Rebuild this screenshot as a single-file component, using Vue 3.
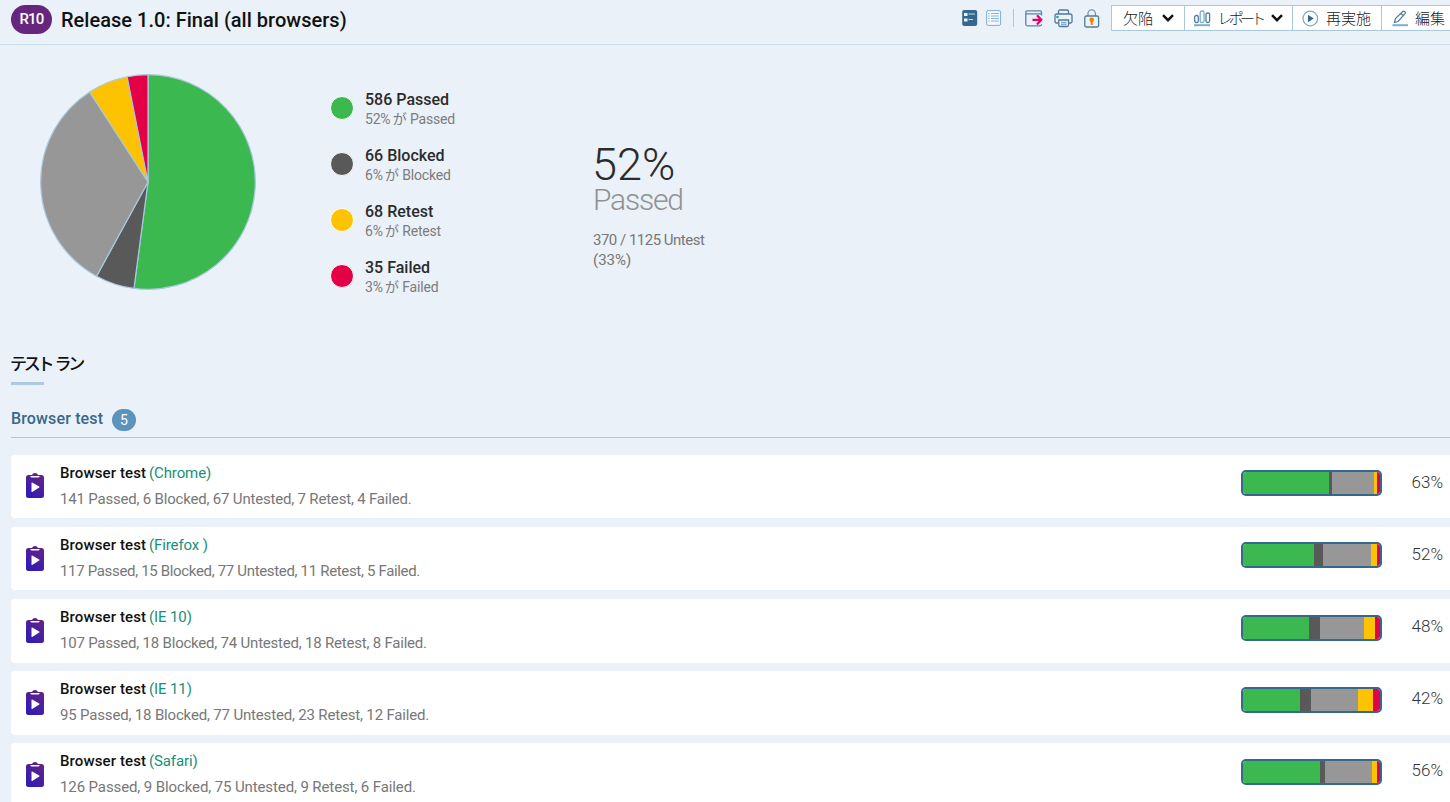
<template>
  <div class="page">
    <header class="header">
      <span class="run-id">R10</span>
      <h1 class="title">Release 1.0: Final (all browsers)</h1>
      <div class="tools">
        <svg class="tool-list" width="16" height="16" viewBox="0 0 16 16">
          <rect x="0.2" y="0" width="15" height="16" rx="2" fill="#35688c" />
          <path d="M2 3h3.500v3H2zM2 8.500h3.500v3H2z" fill="#eaf1f8" />
          <path d="M6.500 4h6.500M6.500 9.500h4.500" stroke="#c3d9e8" />
        </svg>
        <svg class="tool-detail" width="16" height="16" viewBox="0 0 16 16">
          <rect x="0.6" y="0.6" width="14" height="14.8" rx="1.5" fill="#f3f8fc" stroke="#7fadd0" />
          <path d="M2.200 3.500h1.500M2.200 6h1.500M2.200 8.500h1.500M2.200 11h1.500M5 3.500h8M5 6h8M5 8.500h8M5 11h8" stroke="#8ab4d3" />
        </svg>
        <span class="divider"></span>
        <svg class="tool-export" width="19" height="17" viewBox="0 0 19 17" fill="none">
          <path d="M16.500 5.500v-3Q16.500 .8 15 .8H2.500Q.8 .8 .8 2.500v11.800q0 1.500 1.700 1.500H15q1.500 0 1.500-1.500M.8 3.800h15.700" stroke="#5b86a5" stroke-width="1.300" />
          <path d="M7.500 9.800h8.500M12 5.200l4.300 4.600-4.300 4.600" stroke="#e5006d" stroke-width="2.200" />
        </svg>
        <svg class="tool-print" width="20" height="19" viewBox="0 0 20 19" fill="none" stroke="#4e7b9c" stroke-width="1.300">
          <path d="M4.500 5V2.500Q4.500 1 6 1h7q1.500 0 1.500 1.500V5M5 14H2.500Q1 14 1 12.500V7q0-2 2-2h13q2 0 2 2v5.500q0 1.500-1.500 1.500H14.500" />
          <path d="M4.800 11h9.700v5q0 1.500-1.500 1.500H6.300q-1.500 0-1.500-1.500z" fill="#f5f9fc" />
          <path d="M7 13.500h5.500M7 15.500h5.500" stroke="#85afd0" />
          <circle cx="3.500" cy="8" r="0.700" stroke="#26a38b" />
        </svg>
        <svg class="tool-lock" width="16" height="19" viewBox="0 0 16 19" fill="none">
          <path d="M4 7V4.500a3.700 3.700 0 0 1 7.400 0V7" stroke="#7896ab" stroke-width="1.300" />
          <rect x="0.800" y="7" width="13.800" height="11" rx="1.500" fill="#eef5fa" stroke="#4e7b9c" stroke-width="1.300" />
          <circle cx="7.700" cy="10.700" r="2.300" fill="#f57c00" />
          <path d="M7.700 11v5" stroke="#f57c00" stroke-width="2" />
        </svg>
      </div>
      <nav class="buttons">
        <button class="btn defects">
          欠陥
          <svg class="chevron" width="12" height="8" viewBox="0 0 12 8"><path d="M1 1.200l5 5 5-5" /></svg>
        </button>
        <button class="btn reports">
          <svg class="icon" width="17" height="17" viewBox="0 0 17 17" fill="none">
            <rect x="0.700" y="5.500" width="3.600" height="7" rx="1.500" stroke="#4e7b9c" stroke-width="1.300" />
            <rect x="6.200" y="1" width="3.800" height="11.500" rx="1.500" stroke="#78aed3" stroke-width="1.300" />
            <rect x="12" y="3" width="3.600" height="9.500" rx="1.500" stroke="#4e7b9c" stroke-width="1.300" />
            <path d="M0 15.200h16" stroke="#78aed3" stroke-width="2" />
          </svg>
          <span class="kana">レポート</span>
          <svg class="chevron" width="12" height="8" viewBox="0 0 12 8"><path d="M1 1.200l5 5 5-5" /></svg>
        </button>
        <button class="btn rerun">
          <svg class="icon" width="17" height="17" viewBox="0 0 17 17">
            <circle cx="8.300" cy="8.500" r="7.300" fill="#fff" stroke="#78a9cb" stroke-width="1.200" />
            <path d="M6 4.700v7.600l5.700-3.800z" fill="#35688c" />
          </svg>
          再実施
        </button>
        <button class="btn edit">
          <svg class="icon" width="17" height="17" viewBox="0 0 17 17" fill="none">
            <path d="M2.500 12.500l1-4 7.300-7q1-.8 2 .2t.2 2L6 11.500zM9 3.500l2.300 2.300" stroke="#4e7b9c" stroke-width="1.200" />
            <path d="M0.500 15.200h15.500" stroke="#78aed3" stroke-width="2" />
          </svg>
          編集
        </button>
      </nav>
    </header>

    <section class="summary">
      <svg class="pie" width="218" height="218" viewBox="-109 -109 218 218">
        <path v-for="slice in slices" :key="slice.color" :d="slice.path" :fill="slice.color" />
      </svg>
      <ul class="legend">
        <li v-for="item in legend" :key="item.name">
          <i class="dot" :class="item.name.toLowerCase()"></i>
          <div>
            <div class="legend-count">{{ item.count }} {{ item.name }}</div>
            <div class="legend-share">{{ item.share }}% <span class="ga">が</span> {{ item.name }}</div>
          </div>
        </li>
      </ul>
      <div class="total">
        <div class="total-percent">52%</div>
        <div class="total-label">Passed</div>
        <div class="total-note">370 / 1125 Untest<br /><span class="total-share">(33%)</span></div>
      </div>
    </section>

    <h2 class="section-title">テスト ラン</h2>
    <h3 class="group">
      <span class="group-name">Browser test</span><span class="group-count">5</span>
    </h3>

    <div class="runs">
      <div v-for="run in runs" :key="run.config" class="run">
        <svg class="clipboard" width="18" height="26" viewBox="0 0 18 26">
          <defs>
            <linearGradient id="clip" x1="0.8" y1="0" x2="0.2" y2="1">
              <stop offset="0" stop-color="#662482" />
              <stop offset="1" stop-color="#2e1bb8" />
            </linearGradient>
          </defs>
          <path d="M2.500 2H6q.5-2 3-2t3 2h3.500Q18 2 18 4.500v18q0 2.500-2.500 2.500h-13Q0 25 0 22.500v-18Q0 2 2.500 2z" fill="url(#clip)" />
          <path d="M4.500 3h9v.3q0 1.200-1.400 1.200H5.900q-1.400 0-1.400-1.200z" fill="#fff" />
          <path d="M5.500 10v8.600q0 .7.700.3l7-4.400q.6-.5 0-1L6.200 9.500q-.7-.4-.7.500z" fill="#fff" />
        </svg>
        <div class="run-text">
          <div class="run-name"><b>Browser test</b> <a>({{ run.config }})</a></div>
          <div class="run-stats" :style="{ letterSpacing: run.tracking + 'px' }">
            {{ run.counts[0] }} Passed, {{ run.counts[1] }} Blocked, {{ run.counts[2] }} Untested,
            {{ run.counts[3] }} Retest, {{ run.counts[4] }} Failed.
          </div>
        </div>
        <div class="bar">
          <span
            v-for="(width, i) in run.bar"
            :key="i"
            :class="statuses[i]"
            :style="{ width: width + 'px' }"
          ></span>
        </div>
        <div class="run-percent">{{ run.percent }}%</div>
      </div>
    </div>
  </div>
</template>

<script setup>
const statuses = ["passed", "blocked", "untested", "retest", "failed"];

const legend = [
  { name: "Passed", count: 586, share: 52 },
  { name: "Blocked", count: 66, share: 6 },
  { name: "Retest", count: 68, share: 6 },
  { name: "Failed", count: 35, share: 3 },
];

// tracking evens out the wide "1" in the counts
const runs = [
  { config: "Chrome", counts: [141, 6, 67, 7, 4], bar: [86, 3, 42, 3, 3], percent: 63, tracking: -0.19 },
  { config: "Firefox ", counts: [117, 15, 77, 11, 5], bar: [71, 9, 48, 6, 3], percent: 52, tracking: -0.33 },
  { config: "IE 10", counts: [107, 18, 74, 18, 8], bar: [66, 11, 44, 11, 5], percent: 48, tracking: -0.21 },
  { config: "IE 11", counts: [95, 18, 77, 23, 12], bar: [57, 11, 47, 15, 7], percent: 42, tracking: -0.17 },
  { config: "Safari", counts: [126, 9, 75, 9, 6], bar: [77, 5, 47, 5, 3], percent: 56, tracking: -0.11 },
];

const radius = 107.3;
const point = (share) => {
  const angle = share * 2 * Math.PI;
  return `${radius * Math.sin(angle)} ${-radius * Math.cos(angle)}`;
};

// slices run clockwise from the top
let start = 0;
const slices = [
  { value: 586, color: "#3cb850" },
  { value: 66, color: "#595959" },
  { value: 370, color: "#979797" },
  { value: 68, color: "#fdc300" },
  { value: 35, color: "#e40046" },
].map(({ value, color }) => {
  const end = start + value / 1125;
  const large = end - start > 0.5 ? 1 : 0;
  const path = `M0 0L${point(start)}A${radius} ${radius} 0 ${large} 1 ${point(end)}Z`;
  start = end;
  return { color, path };
});
</script>

<style>
body {
  margin: 0;
  background: #eaf1f8;
}
</style>

<style scoped>
.page {
  width: 1450px;
  height: 802px;
  overflow: hidden;
  background: #eaf1f8;
  color: #111;
  font-family: Roboto, "Noto Sans CJK JP", sans-serif;
}

.header {
  height: 44px;
  border-bottom: 1px solid #cbdfe8;
  display: flex;
  align-items: flex-start;
}

.run-id {
  width: 41px;
  height: 29px;
  margin: 5px 0 0 11px;
  border-radius: 15px;
  background: #66267d;
  color: #fff;
  font-size: 15px;
  font-weight: 500;
  line-height: 29px;
  text-align: center;
  letter-spacing: -0.8px;
}

.title {
  margin: 6px 0 0 9px;
  width: 300px;
  font-size: 20px;
  font-weight: 500;
  line-height: 28px;
  letter-spacing: 0.02px;
  white-space: nowrap;
}

.tools {
  flex: 1;
  display: flex;
  align-items: flex-start;
  padding-top: 10px;
  margin-left: 601px;
}

.tool-detail {
  margin-left: 8px;
}

.divider {
  width: 1px;
  height: 18px;
  margin: -1px 11px 0 11px;
  background: #a9c8dd;
}

.tool-print {
  margin: -1px 0 0 9.5px;
}

.tool-lock {
  margin: -1px 0 0 10px;
}

.buttons {
  width: 339px;
  margin-top: 5px;
  display: flex;
}

.btn {
  box-sizing: border-box;
  height: 26px;
  flex-shrink: 0;
  display: flex;
  align-items: center;
  padding: 0 0 0 11px;
  border: 1px solid #a9c8df;
  border-right: 0;
  background: #fff;
  color: #222;
  font-family: "Noto Sans CJK JP", sans-serif;
  font-size: 15px;
  font-weight: 300;
  line-height: 24px;
  white-space: nowrap;
}

.defects {
  width: 73px;
}

.reports {
  width: 108px;
  padding-left: 9px;
}

.rerun {
  width: 89px;
  padding-left: 9px;
}

.edit {
  width: 80px;
  padding-left: 10px;
}

.icon {
  margin-right: 7px;
}

.edit .icon {
  margin-right: 6px;
}

.reports .icon {
  margin-right: 5px;
}

.kana {
  width: 48px;
  letter-spacing: -3.8px;
}

.chevron {
  margin-left: 9px;
  fill: none;
  stroke: #111;
  stroke-width: 2.4;
}

.reports .chevron {
  margin-left: 7px;
}

.summary {
  height: 296px;
  display: flex;
}

.pie {
  margin: 28px 0 0 39px;
  stroke: #a9c8df;
  stroke-width: 1.2;
  stroke-linejoin: round;
}

.legend {
  width: 190px;
  margin: 45px 0 0 73px;
  padding: 0;
  list-style: none;
}

.legend li {
  height: 56px;
  display: flex;
}

.dot {
  box-sizing: border-box;
  width: 24px;
  height: 24px;
  margin: 6px 11px 0 0;
  border: 1px solid #fff;
  border-radius: 50%;
}

.legend-count {
  color: #2b2b2b;
  font-size: 16px;
  font-weight: 500;
  line-height: 20px;
}

.legend-share {
  color: #7c7c7c;
  font-size: 14px;
  font-weight: 400;
  line-height: 18px;
  letter-spacing: -0.2px;
}

.ga {
  display: inline-block;
  width: 13px;
  margin-left: -1px;
  margin-right: 1px;
  font-size: 14px;
  line-height: 14px;
}

.total {
  padding: 97px 0 0 73px;
}

.total-percent {
  margin-left: -1px;
  color: #2b2b2b;
  font-size: 45px;
  font-weight: 300;
  line-height: 46px;
  white-space: nowrap;
}

.total-label {
  margin-top: -3px;
  color: #919191;
  font-size: 30px;
  font-weight: 300;
  line-height: 30px;
  letter-spacing: -1.2px;
}

.total-note {
  margin-top: 15px;
  color: #777;
  font-size: 15px;
  line-height: 20px;
  letter-spacing: -0.5px;
  white-space: nowrap;
}

.total-share {
  letter-spacing: 0;
}

.section-title {
  margin: 10px 0 0 10px;
  height: 34px;
  font-size: 17px;
  font-weight: 500;
  line-height: 27px;
  letter-spacing: -3.2px;
  word-spacing: 2px;
}

.section-title::after {
  content: "";
  display: block;
  width: 33px;
  height: 3px;
  margin: 4px 0 0 1px;
  background: #adcadf;
}

.group {
  height: 52px;
  margin: 0 0 0 11px;
  border-bottom: 1px solid #a9c8df;
  display: flex;
  align-items: flex-end;
  color: #35688c;
  font-size: 16px;
  font-weight: 500;
}

.group-name {
  width: 101px;
  line-height: 36px;
  letter-spacing: 0.15px;
}

.group-count {
  width: 24px;
  height: 22px;
  margin-bottom: 6px;
  border-radius: 11px;
  background: #5a94bd;
  color: #fff;
  font-size: 14px;
  font-weight: 400;
  line-height: 22px;
  text-align: center;
}

.runs {
  margin: 16.7px 0 0 11px;
}

.run {
  height: 63.7px;
  margin-bottom: 8.4px;
  border-radius: 4px 0 0 4px;
  background: #fff;
  display: flex;
  align-items: flex-start;
}

.clipboard {
  margin: 18.8px 0 0 14.5px;
}

.run-text {
  width: 1181px;
  margin: 5px 0 0 16.5px;
  white-space: nowrap;
}

.run-name {
  font-size: 15px;
  line-height: 26px;
}

.run-name b {
  font-weight: 500;
  letter-spacing: 0.12px;
}

.run-name a {
  margin-left: -1px;
  color: #189078;
  font-weight: 400;
  letter-spacing: -0.1px;
}

.run-stats {
  color: #777;
  font-size: 15px;
  line-height: 26px;
}

.bar {
  box-sizing: border-box;
  width: 141px;
  height: 26px;
  margin-top: 15.7px;
  border: 2px solid #35688c;
  border-radius: 5px;
  display: flex;
  overflow: hidden;
}

.run-percent {
  width: 61px;
  margin-top: 15.3px;
  color: #333;
  font-size: 17px;
  font-weight: 300;
  line-height: 24px;
  text-align: right;
}

.passed {
  background: #3cb850;
}

.blocked {
  background: #595959;
}

.untested {
  background: #979797;
}

.retest {
  background: #fdc300;
}

.failed {
  background: #e40046;
}
</style>
